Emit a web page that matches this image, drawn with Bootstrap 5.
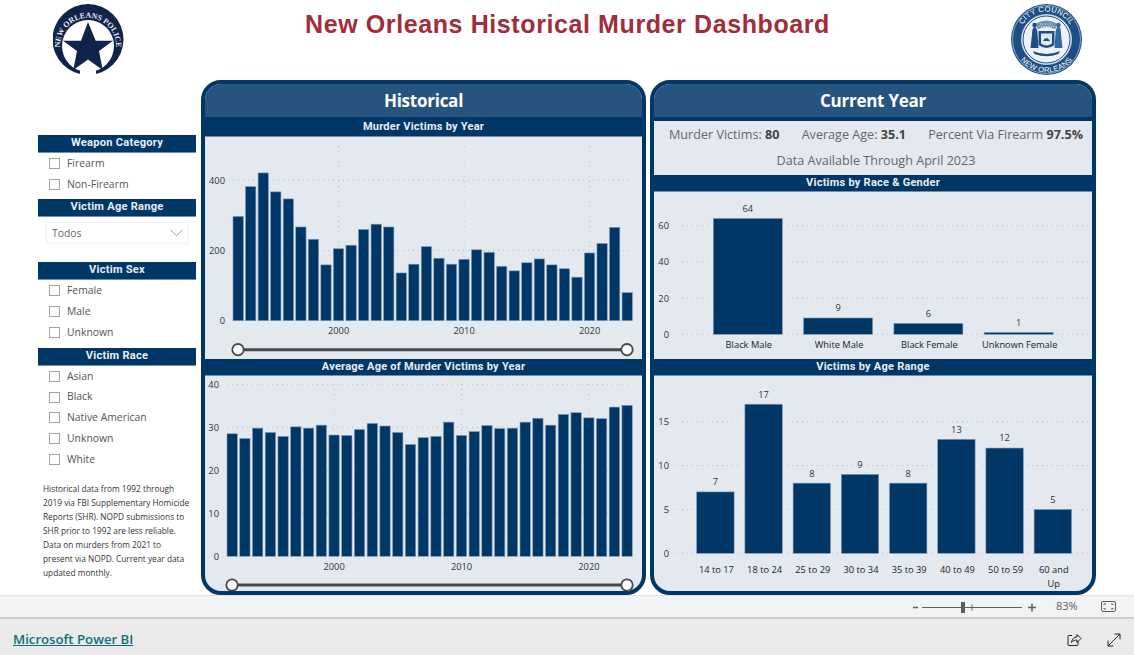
<!DOCTYPE html>
<html lang="en">

<head>
    <meta charset="UTF-8" />
    <title>New Orleans Historical Murder Dashboard</title>
    <meta name="viewport" content="width=device-width, initial-scale=1" />
    <link href="https://cdn.jsdelivr.net/npm/bootstrap@5.3.3/dist/css/bootstrap.min.css" rel="stylesheet" />
    <style>
        body {
            font-family: "Open Sans", sans-serif;
            background: #fff;
        }

        .report-top {
            height: 80px;
            padding: 4px 52px 0 53px;
        }

        .report-title {
            font: 700 25px "Liberation Sans", sans-serif;
            letter-spacing: .6px;
            color: #a12d3b;
            margin: 6px 0 0;
        }

        .side-col {
            width: 158px;
            margin-left: 38px;
            margin-right: 5px;
            padding-top: 55px;
        }

        .side-head {
            background: #003767;
            color: #e9eef4;
            font: 700 11.1px/16px Roboto, sans-serif;
            letter-spacing: .25px;
            text-align: center;
            height: 18px;
            border-bottom: 1px solid #6f8fae;
        }

        .slicer-row {
            height: 21px;
            min-height: 0;
            margin: 0;
            padding: 0 0 0 11px;
            display: flex;
            align-items: center;
        }

        .race-head~.slicer-row {
            height: 20.75px;
        }

        .slicer-row .form-check-input {
            float: none;
            width: 11px;
            height: 11px;
            margin: 0 7px 0 0;
            border: 1px solid #a5a3a1;
            border-radius: 0;
            flex: none;
        }

        .slicer-row .form-check-label {
            font-size: 10.4px;
            color: #555;
        }

        .age-select {
            width: 142px;
            height: 22px;
            margin: 5px 0 18px 8px;
            padding: 1px 0 0 5px;
            font-size: 10.4px;
            color: #666;
            border: 1px solid #f0f0f0;
            border-radius: 0;
            background-image: url("data:image/svg+xml,%3csvg xmlns='http://www.w3.org/2000/svg' viewBox='0 0 14 8'%3e%3cpath fill='none' stroke='%23999' d='M.5 .5 7 7l6.500-6.500'/%3e%3c/svg%3e");
            background-position: right 4px center;
            background-size: 13px 8px;
        }

        .race-head {
            margin-top: 5px;
        }

        .note-text {
            font-size: 8.3px;
            line-height: 14px;
            color: #333;
            margin: 12px 0 0 5px;
            white-space: nowrap;
        }

        .dash-panel {
            width: 445px;
            height: 515px;
            border: 4px solid #003767;
            border-radius: 20px;
            overflow: hidden;
            background: #e4e9f0;
        }

        .dash-panel+.dash-panel {
            width: 446px;
            margin-left: 4px;
        }

        .panel-top {
            background: #27547f;
            color: #fff;
            font-size: 17px;
            font-weight: 700;
            letter-spacing: -.25px;
            text-align: center;
            height: 34px;
            line-height: 33px;
            border-bottom: 1px solid #003767;
        }

        .chart-head {
            background: #003767;
            color: #e9eef4;
            font: 700 11px/16px Roboto, sans-serif;
            letter-spacing: .25px;
            text-align: center;
            height: 17px;
            border-bottom: 1px solid #6f8fae;
        }

        .chart-head.head-first {
            height: 19px;
            line-height: 18px;
        }

        .kpi-box {
            height: 57px;
            border-top: 3px solid #003767;
            color: #666;
            font-size: 12.6px;
            padding-top: 1px;
        }

        .kpi-box b {
            color: #444;
        }

        .kpi-line {
            padding: 0 9px 0 15px;
            height: 26px;
            line-height: 26px;
        }

        .chart-svg {
            display: block;
            width: 100%;
            font-family: "Open Sans", sans-serif;
            font-size: 9.3px;
        }

        .zoom-strip {
            height: 24px;
            background: #f3f3f3;
            border-top: 1px solid #e3e3e3;
            border-bottom: 2px solid #cbcbcb;
            padding-left: 912px;
            color: #605e5c;
        }

        .zoom-pct {
            font-size: 11px;
            margin-left: 20px;
            width: 22px;
        }

        .pbi-footer {
            height: 36px;
            background: #eaeaea;
            padding: 5px 13px 0 13px;
        }

        .pbi-link {
            color: #0f7077;
            font-size: 13.2px;
            font-weight: 600;
        }
    </style>
</head>

<body class="d-flex flex-column vh-100 overflow-hidden">

    <!-- logos and title -->
    <header class="report-top d-flex justify-content-between align-items-start">
        <svg width="71" height="71" viewBox="53 4 71 71">
            <defs>
                <path id="policeArc" d="M60.3 50 A28 28 0 1 1 115.7 50" />
            </defs>
            <circle cx="88" cy="39.5" r="35.5" fill="#10244b" />
            <circle cx="88" cy="46" r="26" fill="#fff" />
            <rect x="80" y="70" width="16" height="6" fill="#fff" />
            <polygon fill="#10244b"
                points="88,22 95.7,40.7 113,40.7 99,51 102.7,70 88,59.5 73.3,70 77,51 63,40.7 81,40.7" />
            <text font-family="Liberation Serif, serif" font-size="7.9" font-weight="700" fill="#e8ebf0">
                <textPath href="#policeArc" startOffset="50%" text-anchor="middle">NEW ORLEANS POLICE</textPath>
            </text>
        </svg>

        <h1 class="report-title">New Orleans Historical Murder Dashboard</h1>

        <svg width="71" height="71" viewBox="1011 4 71 71">
            <defs>
                <path id="sealTop" d="M1018.5 39.5 A28 28 0 0 1 1074.5 39.5" />
                <path id="sealBottom" d="M1013.5 39.5 A33 33 0 0 0 1079.5 39.5" />
            </defs>
            <circle cx="1046.5" cy="39.5" r="35.5" fill="#1d4f86" />
            <circle cx="1046.5" cy="39.5" r="34" fill="none" stroke="#cfdbe8" stroke-width=".6" />
            <circle cx="1046.5" cy="39.5" r="25" fill="#eef2f7" stroke="#cfdbe8" stroke-width=".8" />
            <circle cx="1046.5" cy="39.5" r="23.5" fill="none" stroke="#1d4f86" stroke-width="1" />
            <text font-family="Liberation Sans, sans-serif" font-size="7.6" fill="#fff" letter-spacing=".3">
                <textPath href="#sealTop" startOffset="50%" text-anchor="middle">CITY COUNCIL</textPath>
            </text>
            <text font-family="Liberation Sans, sans-serif" font-size="7.6" fill="#fff" letter-spacing=".3">
                <textPath href="#sealBottom" startOffset="50%" text-anchor="middle">NEW ORLEANS</textPath>
            </text>
            <!-- seal figures and shield -->
            <path d="M1035 24 q11.5-7 23 0 l-3 5 q-8.5-4-17 0z" fill="#6f8fb0" />
            <path d="M1040 24 h13M1038.5 26.5 h16" stroke="#fff" stroke-dasharray="1 1.5" stroke-width=".8" />
            <path d="M1030.5 48 l1.5-14 q0-6 2.5-7.5 q3 1.5 3 7 l1 14.5z" fill="#1d4f86" />
            <path d="M1062.5 48 l-1.5-14 q0-7-2.5-8 q-3 1.5-3 7.5 l-1 14.5z" fill="#33689f" />
            <circle cx="1034.5" cy="25" r="2.2" fill="#1d4f86" />
            <circle cx="1058.5" cy="25" r="2.2" fill="#33689f" />
            <path d="M1038.5 31 h16 v14 q-8 6-16 0z" fill="#1d4f86" />
            <path d="M1041 33.5 h11 v10 q-5.5 4-11 0z" fill="#dfe7f0" />
            <path d="M1043 41 q3.5-6 7 0z" fill="#1d4f86" />
            <path d="M1033 51 q13.5 6 27 0 l-1.5 3 q-12 4.5-24 0z" fill="#1d4f86" />
        </svg>
    </header>

    <main class="d-flex flex-grow-1">
        <!-- slicers -->
        <aside class="side-col flex-shrink-0">
            <div class="side-head">Weapon Category</div>
            <div class="form-check slicer-row"><input class="form-check-input" type="checkbox" id="w1" /><label class="form-check-label" for="w1">Firearm</label></div>
            <div class="form-check slicer-row"><input class="form-check-input" type="checkbox" id="w2" /><label class="form-check-label" for="w2">Non-Firearm</label></div>

            <div class="side-head mt-1">Victim Age Range</div>
            <select class="form-select age-select">
                <option>Todos</option>
            </select>

            <div class="side-head">Victim Sex</div>
            <div class="form-check slicer-row"><input class="form-check-input" type="checkbox" id="s1" /><label class="form-check-label" for="s1">Female</label></div>
            <div class="form-check slicer-row"><input class="form-check-input" type="checkbox" id="s2" /><label class="form-check-label" for="s2">Male</label></div>
            <div class="form-check slicer-row"><input class="form-check-input" type="checkbox" id="s3" /><label class="form-check-label" for="s3">Unknown</label></div>

            <div class="side-head race-head">Victim Race</div>
            <div class="form-check slicer-row"><input class="form-check-input" type="checkbox" id="r1" /><label class="form-check-label" for="r1">Asian</label></div>
            <div class="form-check slicer-row"><input class="form-check-input" type="checkbox" id="r2" /><label class="form-check-label" for="r2">Black</label></div>
            <div class="form-check slicer-row"><input class="form-check-input" type="checkbox" id="r3" /><label class="form-check-label" for="r3">Native American</label></div>
            <div class="form-check slicer-row"><input class="form-check-input" type="checkbox" id="r4" /><label class="form-check-label" for="r4">Unknown</label></div>
            <div class="form-check slicer-row"><input class="form-check-input" type="checkbox" id="r5" /><label class="form-check-label" for="r5">White</label></div>

            <p class="note-text">Historical data from 1992 through<br>2019 via FBI Supplementary Homicide<br>Reports (SHR). NOPD submissions to<br>SHR prior to 1992 are less reliable.<br>Data on murders from 2021 to<br>present via NOPD. Current year data<br>updated monthly.</p>
        </aside>

        <section class="dash-panel flex-shrink-0">
            <div class="panel-top">Historical</div>
            <div class="chart-head head-first">Murder Victims by Year</div>
            <svg id="chartYear" class="chart-svg"></svg>
            <div class="chart-head">Average Age of Murder Victims by Year</div>
            <svg id="chartAge" class="chart-svg"></svg>
        </section>

        <section class="dash-panel flex-shrink-0">
            <div class="panel-top">Current Year</div>
            <div class="kpi-box">
                <div class="kpi-line d-flex justify-content-between">
                    <span>Murder Victims: <b>80</b></span>
                    <span>Average Age: <b>35.1</b></span>
                    <span>Percent Via Firearm <b>97.5%</b></span>
                </div>
                <div class="kpi-line text-center">Data Available Through April 2023</div>
            </div>
            <div class="chart-head">Victims by Race &amp; Gender</div>
            <svg id="chartRace" class="chart-svg"></svg>
            <div class="chart-head">Victims by Age Range</div>
            <svg id="chartRange" class="chart-svg"></svg>
        </section>
    </main>

    <!-- power bi chrome -->
    <div class="zoom-strip d-flex align-items-center flex-shrink-0">
        <svg width="124" height="14" viewBox="912 600 124 14">
            <path d="M913 607.5h5M1028 607.5h8M1032 603.5v8" stroke="#605e5c" stroke-width="1.5" fill="none" />
            <path d="M922 607.5h100M972 604.5v6" stroke="#605e5c" fill="none" />
            <rect x="961" y="602" width="4" height="11" fill="#605e5c" />
        </svg>
        <span class="zoom-pct">83%</span>
        <svg class="ms-auto" style="margin-right:18px" width="15" height="11" viewBox="0 0 15 11">
            <rect x=".5" y=".5" width="14" height="10" rx="1.5" fill="none" stroke="#605e5c" />
            <path d="M3 4V3h2M10 3h2v1M3 7v1h2M10 8h2V7" fill="none" stroke="#605e5c" />
        </svg>
    </div>
    <footer class="pbi-footer d-flex align-items-center flex-shrink-0">
        <a href="#" class="pbi-link">Microsoft Power BI</a>
        <svg class="ms-auto" width="15" height="15" viewBox="0 0 15 15" fill="none" stroke="#252423">
            <path d="M5 3.5H2q-1 0-1 1v8q0 1 1 1h8q1 0 1-1V9" />
            <path d="M4.5 10.5c.3-3.5 2.5-5.5 5.5-5.5V2.500l4 4-4 4V8c-2.5 0-4.2.8-5.5 2.5z" />
        </svg>
        <svg style="margin-left:25px" width="14" height="14" viewBox="0 0 14 14" fill="none" stroke="#252423">
            <path d="M1 13 13 1M7.5 1H13v5.5M1 7.5V13h5.5" />
        </svg>
    </footer>

    <script>
        const NAVY = '#003767';
        const years = [];
        for (let y = 1992; y <= 2023; y++) years.push(y);

        const victims = [297, 382, 421, 367, 347, 267, 232, 159, 205, 215, 260, 275, 267, 136, 161, 211,
            178, 161, 175, 202, 195, 155, 142, 165, 176, 159, 148, 124, 193, 220, 266, 80];
        const ages = [28.5, 27.4, 29.8, 28.8, 27.9, 30.1, 29.8, 30.5, 28.2, 28.1, 29.5, 30.9, 30.3, 28.8, 26, 27.6,
            27.9, 31.2, 28.1, 29, 30.4, 29.7, 29.8, 31.2, 32.1, 30.5, 33, 33.4, 32.2, 32, 34.7, 35.1];

        // all chart coordinates are in report pixels, the viewBox takes care of the panel offset
        function setBox(svg, x, y, w, h) {
            svg.setAttribute('viewBox', `${x} ${y} ${w} ${h}`);
            svg.setAttribute('height', h);
        }

        function label(x, y, txt, anchor, fill) {
            return `<text x="${x}" y="${y + 3.4}" text-anchor="${anchor}" fill="${fill}">${txt}</text>`;
        }

        function hGrid(x1, x2, y) {
            return `<line x1="${x1}" x2="${x2}" y1="${y}" y2="${y}" stroke="#bdbdbd" stroke-dasharray="1 4" />`;
        }

        function bar(x, w, top, base) {
            return `<rect x="${x}" y="${top}" width="${w}" height="${base - top}" fill="${NAVY}" stroke="#7f9ab5" stroke-width=".6" />`;
        }

        function slider(x1, x2, y) {
            const knob = x => `<circle cx="${x}" cy="${y}" r="5.7" fill="#fff" stroke="#484848" stroke-width="1.8" />`;
            return `<line x1="${x1}" x2="${x2}" y1="${y}" y2="${y}" stroke="#484848" stroke-width="3" />` + knob(x1) + knob(x2);
        }

        function yearChart(id, box, data, o) {
            let s = '';
            o.ticks.forEach(t => {
                const y = o.base - t * o.scale;
                if (t) s += hGrid(o.x0, 632, y);
                s += label(o.axisX, y, t, 'end', '#333');
            });
            years.forEach((yr, i) => {
                if (yr % 10 === 0) {
                    const cx = o.x0 + 5.2 + i * o.pitch;
                    s += `<line x1="${cx}" x2="${cx}" y1="${o.gridTop}" y2="${o.base}" stroke="#c4c4c4" stroke-dasharray="1 4" />`;
                    s += label(cx, o.base + o.labelGap, yr, 'middle', '#333');
                }
            });
            data.forEach((v, i) => {
                s += bar(o.x0 + i * o.pitch, 10.3, o.base - v * o.scale, o.base);
            });
            s += slider(o.x0 + 5, 627, o.sliderY);
            const svg = document.getElementById(id);
            setBox(svg, ...box);
            svg.innerHTML = s;
        }

        function categoryChart(id, box, rows, o) {
            let s = '';
            o.ticks.forEach(t => {
                const y = o.base - t * o.scale;
                s += hGrid(677, 1090, y);
                s += label(669, y, t, 'end', '#333');
            });
            rows.forEach((r, i) => {
                const x = o.x0 + i * o.pitch;
                const top = o.base - r[1] * o.scale;
                s += `<rect x="${x - 3}" y="${top - 1}" width="${o.width + 6}" height="${o.base - top + 1}" fill="#e4e9f0" />`;
                s += bar(x, o.width, top, o.base);
                s += label(x + o.width / 2, top - 10, r[1], 'middle', '#333');
                r[0].split('|').forEach((line, n) => {
                    s += label(x + o.width / 2 + 1, o.base + o.labelGap + n * 13.4, line, 'middle', '#222');
                });
            });
            const svg = document.getElementById(id);
            setBox(svg, ...box);
            svg.innerHTML = s;
        }

        yearChart('chartYear', [205, 137, 437, 222], victims, {
            x0: 233, pitch: 12.55, base: 320.7, scale: .351, ticks: [0, 200, 400],
            axisX: 225, gridTop: 146, labelGap: 10, sliderY: 349.7
        });
        yearChart('chartAge', [205, 376, 437, 215], ages, {
            x0: 227, pitch: 12.74, base: 556.3, scale: 4.3, ticks: [0, 10, 20, 30, 40],
            axisX: 219, gridTop: 384, labelGap: 10.4, sliderY: 585
        });

        categoryChart('chartRace', [654, 192, 438, 167], [
            ['Black Male', 64], ['White Male', 9], ['Black Female', 6], ['Unknown Female', 1]
        ], { x0: 713.3, pitch: 90.3, width: 69, base: 334.3, scale: 1.81, ticks: [0, 20, 40, 60], labelGap: 10.4 });

        categoryChart('chartRange', [654, 376, 438, 215], [
            ['14 to 17', 7], ['18 to 24', 17], ['25 to 29', 8], ['30 to 34', 9],
            ['35 to 39', 8], ['40 to 49', 13], ['50 to 59', 12], ['60 and|Up', 5]
        ], { x0: 696.7, pitch: 48.2, width: 37.4, base: 553.3, scale: 8.77, ticks: [0, 5, 10, 15], labelGap: 16.4 });
    </script>
</body>

</html>
